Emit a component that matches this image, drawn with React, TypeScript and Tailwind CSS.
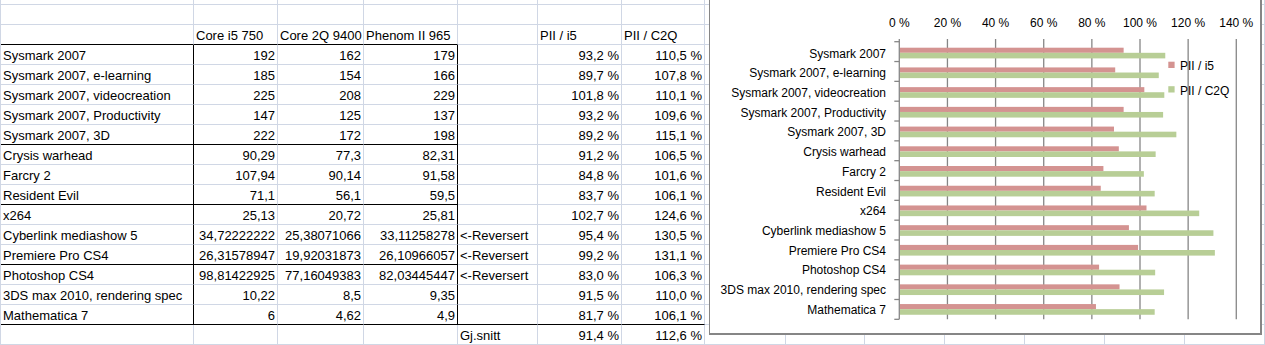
import clsx from "clsx";

type Row = {
  name: string;
  i5: string;
  c2q: string;
  phenom: string;
  note?: string;
  pi5: number;
  pc2q: number;
};

const rows: Row[] = [
  { name: "Sysmark 2007", i5: "192", c2q: "162", phenom: "179", pi5: 93.2, pc2q: 110.5 },
  { name: "Sysmark 2007, e-learning", i5: "185", c2q: "154", phenom: "166", pi5: 89.7, pc2q: 107.8 },
  { name: "Sysmark 2007, videocreation", i5: "225", c2q: "208", phenom: "229", pi5: 101.8, pc2q: 110.1 },
  { name: "Sysmark 2007, Productivity", i5: "147", c2q: "125", phenom: "137", pi5: 93.2, pc2q: 109.6 },
  { name: "Sysmark 2007, 3D", i5: "222", c2q: "172", phenom: "198", pi5: 89.2, pc2q: 115.1 },
  { name: "Crysis warhead", i5: "90,29", c2q: "77,3", phenom: "82,31", pi5: 91.2, pc2q: 106.5 },
  { name: "Farcry 2", i5: "107,94", c2q: "90,14", phenom: "91,58", pi5: 84.8, pc2q: 101.6 },
  { name: "Resident Evil", i5: "71,1", c2q: "56,1", phenom: "59,5", pi5: 83.7, pc2q: 106.1 },
  { name: "x264", i5: "25,13", c2q: "20,72", phenom: "25,81", pi5: 102.7, pc2q: 124.6 },
  { name: "Cyberlink mediashow 5", i5: "34,72222222", c2q: "25,38071066", phenom: "33,11258278", note: "<-Reversert", pi5: 95.4, pc2q: 130.5 },
  { name: "Premiere Pro CS4", i5: "26,31578947", c2q: "19,92031873", phenom: "26,10966057", note: "<-Reversert", pi5: 99.2, pc2q: 131.1 },
  { name: "Photoshop CS4", i5: "98,81422925", c2q: "77,16049383", phenom: "82,03445447", note: "<-Reversert", pi5: 83.0, pc2q: 106.3 },
  { name: "3DS max 2010, rendering spec", i5: "10,22", c2q: "8,5", phenom: "9,35", pi5: 91.5, pc2q: 110.0 },
  { name: "Mathematica 7", i5: "6", c2q: "4,62", phenom: "4,9", pi5: 81.7, pc2q: 106.1 },
];

const NCOLS = 14;
const pct = (v: number) => v.toFixed(1).replace(".", ",") + " %";

type CellProps = {
  text?: string;
  right?: boolean;
  bBlack?: boolean;
  rBlack?: boolean;
  short?: boolean;
};

function Cell({ text, right, bBlack, rBlack, short }: CellProps) {
  return (
    <div
      className={clsx(
        "border-b border-r px-[2px] whitespace-nowrap",
        short ? "h-[5px]" : "h-[20px] pt-[3px] leading-[16px]",
        right && "text-right",
        bBlack ? "border-b-black" : "border-b-[#d0d7e5]",
        rBlack ? "border-r-black" : "border-r-[#d0d7e5]"
      )}
    >
      {text}
    </div>
  );
}

function Sheet() {
  const blank = (key: string, short = false) =>
    Array.from({ length: NCOLS }, (_, c) => <Cell key={key + c} short={short} />);

  const header = ["", "Core i5 750", "Core 2Q 9400", "Phenom II 965", "", "PII / i5", "PII / C2Q"];

  return (
    <div className="grid grid-cols-[193px_84px_86px_94px_80px_84px_83px_81px_79px_80px_80px_80px_80px_80px] border-l border-l-[#d0d7e5]">
      {blank("top", true)}
      {blank("empty")}
      {Array.from({ length: NCOLS }, (_, c) => (
        <Cell key={"h" + c} text={header[c]} bBlack={c <= 3} />
      ))}
      {rows.map((r, i) => {
        // black rule under each benchmark group
        const groupEnd = i === 4 || i === 7 || i === 10;
        const last = i === rows.length - 1;
        const vals: (string | undefined)[] = [r.name, r.i5, r.c2q, r.phenom, r.note, pct(r.pi5), pct(r.pc2q)];
        return Array.from({ length: NCOLS }, (_, c) => (
          <Cell
            key={r.name + c}
            text={vals[c]}
            right={c >= 1 && c !== 4 && c <= 6}
            bBlack={(groupEnd && c <= 3) || (last && c <= 6)}
            rBlack={c === 0 || c === 3}
          />
        ));
      })}
      {Array.from({ length: NCOLS }, (_, c) => (
        <Cell
          key={"avg" + c}
          text={c === 4 ? "Gj.snitt" : c === 5 ? "91,4 %" : c === 6 ? "112,6 %" : undefined}
          right={c === 5 || c === 6}
        />
      ))}
    </div>
  );
}

// chart geometry in page pixels
const X0 = 899.3;
const PX = 2.407;
const TICK0 = 41.7;
const TICK_STEP = 19.83;
const BAR0 = 47.7;
const BAR_STEP = 19.72;
const RED = "#d49391";
const GREEN = "#b8ce96";
const GRID = "#868686";

function Chart() {
  const steps = [0, 20, 40, 60, 80, 100, 120, 140];
  return (
    <div className="absolute left-[709px] top-[-2px] h-[337px] w-[553px] border-t border-l border-r-2 border-b-2 border-[#868686] bg-white">
      <svg
        className="absolute left-[-1px] top-[-1px]"
        width={553}
        height={337}
        viewBox="709 -2 553 337"
        fontFamily="'Liberation Sans', Arial, sans-serif"
        fontSize={12}
      >
        {steps.map((p) => (
          <text key={"t" + p} x={X0 + p * PX} y={27} textAnchor="middle" fill="#000">
            {p} %
          </text>
        ))}
        {steps.slice(1).map((p) => (
          <line key={"g" + p} x1={X0 + p * PX} x2={X0 + p * PX} y1={39} y2={319.3} stroke={GRID} strokeWidth={1.3} />
        ))}
        <line x1={X0} x2={X0} y1={39} y2={319.3} stroke={GRID} strokeWidth={1.3} />
        {Array.from({ length: 15 }, (_, i) => (
          <line
            key={"k" + i}
            x1={X0 - 5}
            x2={X0}
            y1={TICK0 + i * TICK_STEP}
            y2={TICK0 + i * TICK_STEP}
            stroke={GRID}
            strokeWidth={1.3}
          />
        ))}
        {rows.map((r, i) => {
          const y = BAR0 + i * BAR_STEP;
          return (
            <g key={r.name}>
              <rect x={X0 + 0.7} y={y} width={r.pi5 * PX - 0.7} height={5.1} fill={RED} />
              <rect x={X0 + 0.7} y={y + 5.1} width={r.pc2q * PX - 0.7} height={5.6} fill={GREEN} />
              <text x={886} y={y + 9.8} textAnchor="end" fill="#000">
                {r.name}
              </text>
            </g>
          );
        })}
        <rect x={1168.3} y={61.7} width={6.3} height={6.3} fill={RED} />
        <text x={1180} y={70} fill="#000">PII / i5</text>
        <rect x={1168.3} y={86.2} width={6.3} height={6.3} fill={GREEN} />
        <text x={1180} y={94.5} fill="#000">PII / C2Q</text>
      </svg>
    </div>
  );
}

export default function App() {
  return (
    <div className="relative h-[345px] w-[1265px] overflow-hidden bg-white font-['Liberation_Sans',Arial,sans-serif] text-[13px] text-black">
      <Sheet />
      <Chart />
    </div>
  );
}
